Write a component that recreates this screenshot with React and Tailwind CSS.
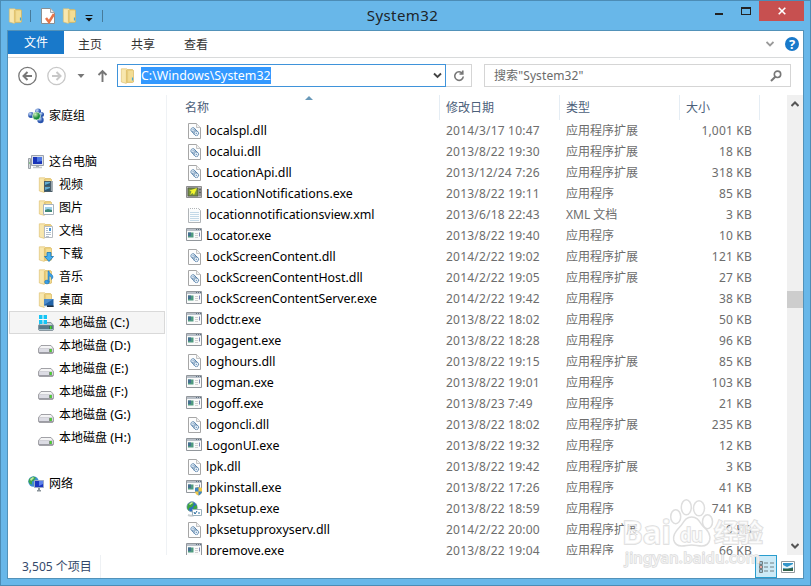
const folders = [
  { name: '视频', kind: 'video' },
  { name: '图片', kind: 'picture' },
  { name: '文档', kind: 'document' },
  { name: '下载', kind: 'download' },
  { name: '音乐', kind: 'music' },
  { name: '桌面', kind: 'desktop' },
];

const drives = ['C', 'D', 'E', 'F', 'G', 'H'];

const files = [
  { name: 'localspl.dll', date: '2014/3/17 10:47', size: '1,001 KB', icon: 'dll' },
  { name: 'localui.dll', date: '2013/8/22 19:30', size: '18 KB', icon: 'dll' },
  { name: 'LocationApi.dll', date: '2013/12/24 7:26', size: '318 KB', icon: 'dll' },
  { name: 'LocationNotifications.exe', date: '2013/8/22 19:11', size: '85 KB', icon: 'location' },
  { name: 'locationnotificationsview.xml', date: '2013/6/18 22:43', size: '3 KB', icon: 'xml' },
  { name: 'Locator.exe', date: '2013/8/22 19:40', size: '10 KB', icon: 'exe' },
  { name: 'LockScreenContent.dll', date: '2014/2/22 19:02', size: '121 KB', icon: 'dll' },
  { name: 'LockScreenContentHost.dll', date: '2014/2/22 19:05', size: '27 KB', icon: 'dll' },
  { name: 'LockScreenContentServer.exe', date: '2014/2/22 19:42', size: '38 KB', icon: 'exe' },
  { name: 'lodctr.exe', date: '2013/8/22 18:02', size: '50 KB', icon: 'exe' },
  { name: 'logagent.exe', date: '2013/8/22 18:28', size: '96 KB', icon: 'exe' },
  { name: 'loghours.dll', date: '2013/8/22 19:15', size: '85 KB', icon: 'dll' },
  { name: 'logman.exe', date: '2013/8/22 19:01', size: '103 KB', icon: 'exe' },
  { name: 'logoff.exe', date: '2013/8/23 7:49', size: '21 KB', icon: 'exe' },
  { name: 'logoncli.dll', date: '2013/8/22 18:02', size: '235 KB', icon: 'dll' },
  { name: 'LogonUI.exe', date: '2013/8/22 19:32', size: '12 KB', icon: 'exe' },
  { name: 'lpk.dll', date: '2013/8/22 19:42', size: '3 KB', icon: 'dll' },
  { name: 'lpkinstall.exe', date: '2013/8/22 17:26', size: '41 KB', icon: 'shield' },
  { name: 'lpksetup.exe', date: '2013/8/22 18:59', size: '741 KB', icon: 'globe' },
  { name: 'lpksetupproxyserv.dll', date: '2014/2/22 20:00', size: '9 KB', icon: 'dll' },
  { name: 'lpremove.exe', date: '2013/8/22 19:04', size: '66 KB', icon: 'exe' },
];

function fileType(name) {
  if (name.endsWith('.dll')) return '应用程序扩展';
  if (name.endsWith('.xml')) return 'XML 文档';
  return '应用程序';
}

function FolderIcon({ className = '', kind }) {
  return (
    <svg className={`shrink-0 ${className}`} width="16" height="16" viewBox="0 0 16 16">
      <path d="M5 1.500h7.500l1 1V14l-1 .5H6z" fill="#ecd07c" stroke="#d5b158" strokeWidth=".6" />
      <path d="M8 3h5v10.500H8z" fill="#f3dd94" />
      <path d="M1.300.800h5.500l.8 1V13l-1.300 2.400-5-1.400z" fill="#f8e7ae" stroke="#dcbc68" strokeWidth=".6" />
      <path d="M6.500 2v12.500" stroke="#e2c470" strokeWidth="1.200" />
      {!kind && <path d="M12.500 9.500v3" stroke="#43a8dc" strokeWidth="1.200" />}
      {kind === 'video' && (
        <g>
          <path d="M6 4h8.500v11H6z" fill="#4c5e69" />
          <path d="M7 5h5v4H7zM7 10h5v4H7z" fill="#62abd0" />
          <path d="M7 8l5-2v3H7zM7 13l5-2v3H7z" fill="#2c5873" />
          <path d="M13.500 4.500v10" stroke="#e8eef2" strokeWidth="1" strokeDasharray="1 1" />
        </g>
      )}
      {kind === 'picture' && (
        <g>
          <path d="M5.500 4.500h10v10h-10z" fill="#fff" stroke="#a7b2bc" />
          <path d="M7 7h7v5H7z" fill="#9dd0ea" />
          <path d="M7 10l3-1 4 1v2H7z" fill="#3e8877" />
        </g>
      )}
      {kind === 'document' && (
        <g>
          <path d="M6.500 3.500h8v11h-8z" fill="#fff" stroke="#b5bac0" />
          <path d="M8 5.500h2M8 7.500h2M8 9.500h5M8 11.500h5M8 13.500h3" stroke="#a1b0bd" strokeWidth=".8" />
          <path d="M11 5h2v3h-2z" fill="#4799db" />
        </g>
      )}
      {kind === 'download' && (
        <path d="M9 6.500h4v4h2.500L11 15.500 6.500 10.500H9z" fill="#47b0ee" stroke="#1875b5" strokeWidth="0.800" />
      )}
      {kind === 'music' && (
        <g fill="#3b9fe6" stroke="#1971b3" strokeWidth="0.500">
          <ellipse cx="9" cy="13" rx="2.400" ry="1.900" />
          <path d="M10 2h1c0 3 4 3 4 6 0 1-1 2-1.500 2.500C14 8 12 7 11.200 7v6H10z" />
        </g>
      )}
      {kind === 'desktop' && (
        <g>
          <path d="M6 7h9.500v8H6z" fill="#2364a8" />
          <path d="M6 7h9.500L6 13z" fill="#4c8ccc" />
          <path d="M6 13.500h9.500V15H6z" fill="#23303e" />
          <path d="M6 13.500h3V15H6z" fill="#d5e9f3" />
        </g>
      )}
    </svg>
  );
}

function DriveIcon({ system }) {
  return (
    <svg className="shrink-0" width="16" height="16" viewBox="0 0 16 16">
      <path d="M3 7.500h10l2.500 3v4l-.8 1H1.300l-.8-1v-4z" fill={system ? '#7c8e98' : '#c5c5ca'} stroke={system ? '#7c8e98' : '#929297'} strokeWidth=".8" />
      <path d="M3.200 8h9.600l1.700 2h-13z" fill={system ? '#c6d0d5' : '#f4f4f5'} />
      <path d="M1.200 10.500h13.600v3.500H1.200z" fill={system ? '#587889' : '#dcdce4'} />
      <path d="M1 14.500h14" stroke={system ? '#a1c0ca' : '#9c9ca4'} />
      <path d="M11 11h3v3h-3z" fill={system ? '#336e55' : '#7f967c'} />
      <path d="M12 11h1.500v3H12z" fill="#49d52d" />
      {system && (
        <g>
          <path d="M1 0h8v9H1z" fill="#fff" opacity="0.700" />
          <path d="M1 0h3.500v4H1zM5.500 0H9v4H5.500zM1 5h3.500v4H1zM5.500 5H9v4H5.500z" fill="#16c5f5" />
        </g>
      )}
    </svg>
  );
}

function HomeGroupIcon() {
  return (
    <svg className="shrink-0" width="17" height="16" viewBox="0 0 17 16">
      <defs>
        <radialGradient id="blueBall" cx="0.350" cy="0.300">
          <stop offset="0" stopColor="#c7ddfa" />
          <stop offset="1" stopColor="#2853ad" />
        </radialGradient>
        <radialGradient id="greenBall" cx="0.350" cy="0.300">
          <stop offset="0" stopColor="#ceefb8" />
          <stop offset="1" stopColor="#168b39" />
        </radialGradient>
      </defs>
      <circle cx="10" cy="3.500" r="3" fill="url(#blueBall)" />
      <circle cx="13.500" cy="6.500" r="2.500" fill="url(#blueBall)" />
      <circle cx="3" cy="7" r="2.900" fill="url(#blueBall)" />
      <circle cx="12.500" cy="12" r="3.200" fill="url(#blueBall)" />
      <circle cx="8.500" cy="8" r="4" fill="url(#greenBall)" stroke="#e9f3ef" strokeWidth="0.700" />
    </svg>
  );
}

function ComputerIcon() {
  return (
    <svg className="shrink-0" width="16" height="16" viewBox="0 0 16 16">
      <path d="M.5 4.500h2v10h-2z" fill="#d3d8dc" stroke="#9aa1a6" />
      <path d="M1 9h1" stroke="#3eaa40" />
      <path d="M3.500 1.500h12v10h-12z" fill="#dde1e8" stroke="#9ba2ad" />
      <path d="M5 3h9v7H5z" fill="#1a34b8" />
      <path d="M9 3h5v4L9 8z" fill="#4e78e4" />
      <path d="M8 12h3v1H8z" fill="#a1a7aa" />
      <path d="M5 13.500h9" stroke="#c1c6c9" strokeWidth="1.500" />
    </svg>
  );
}

function NetworkIcon() {
  return (
    <svg className="shrink-0" width="16" height="16" viewBox="0 0 16 16">
      <circle cx="5.500" cy="5.500" r="5.200" fill="#3c8fd0" />
      <path d="M1 3l4-2.500 3 1-2 3-2 1v3L2 8 .5 6z" fill="#3ba64e" />
      <path d="M2 3l3-2 1 1-3 3z" fill="#c3e7a6" />
      <path d="M6.500 4.500h9v7h-9z" fill="#1b35bf" stroke="#9daac4" />
      <path d="M11 5h4v3l-4 2z" fill="#5c81ec" />
      <path d="M10 12h2v2h-2zM9 14h4v1.500H9z" fill="#8c959b" />
    </svg>
  );
}

function FileIcon({ type }) {
  if (type === 'dll') {
    return (
      <svg className="shrink-0" width="16" height="16" viewBox="0 0 16 16">
        <path d="M2.500.500h8l4 4v11h-12z" fill="#fdfdfd" stroke="#a6a6a6" />
        <path d="M10.500.5v4h4" fill="#f1f1f1" stroke="#b5b5b5" strokeWidth=".8" />
        <g fill="#e8f1f9" stroke="#41719f">
          <circle cx="7" cy="6.800" r="2.100" strokeDasharray="1.100 .4" />
          <circle cx="10.300" cy="10.300" r="2.300" strokeDasharray="1.200 .4" />
          <path d="M8.500 5.500l3 3M5.500 8.300l3 3" strokeWidth=".8" />
          <path d="M6.600 6.800h1M9.800 10.300h1" />
        </g>
      </svg>
    );
  }

  if (type === 'xml') {
    return (
      <svg className="shrink-0" width="16" height="16" viewBox="0 0 16 16">
        <path d="M2.500 1.500h10l2 2v12h-12z" fill="#fafcfd" stroke="#b0b4b7" />
        <path d="M3 1.500h9" stroke="#fff" strokeDasharray="1 1" strokeWidth="2" />
        <path d="M4 5.500h9M4 7.500h9M4 9.500h9M4 11.500h9M4 13.500h9" stroke="#c3d9e8" />
      </svg>
    );
  }

  if (type === 'location') {
    return (
      <svg className="shrink-0" width="16" height="16" viewBox="0 0 16 16">
        <path d="M.5.500h15v11H.500z" fill="#bcbcbc" stroke="#8c8c8c" />
        <path d="M2 2h10v8H2z" fill="#7b9440" stroke="#4b5446" strokeWidth=".8" />
        <path d="M3.500 4.500L11 2 8 9l-1.500-2L4 9l1.500-3.500z" fill="#f2f52e" />
        <path d="M14 2.500v7" stroke="#444" strokeWidth="1.500" strokeDasharray="2 1" />
      </svg>
    );
  }

  if (type === 'globe') {
    return (
      <svg className="shrink-0" width="16" height="16" viewBox="0 0 16 16">
        <path d="M2 14c5 2 10-1 9-8" fill="none" stroke="#c7cdd0" strokeWidth="2" />
        <circle cx="6" cy="5.800" r="5" fill="#2c6fc2" stroke="#7d9db5" />
        <path d="M2 3l4-2 2 2-2 3-3 1v3L1 7zM8 5l3-1v3l-2 3-2-2z" fill="#3da540" />
        <path d="M3 3l3-2 1 1-3 2z" fill="#d9ed9c" />
        <path d="M6.500 8.500h9v6h-9z" fill="#fff" stroke="#9ab0bc" />
        <path d="M8 11l1 2 2-3M12 12h2" fill="none" stroke="#276c9f" />
      </svg>
    );
  }

  return (
    <svg className="shrink-0" width="16" height="16" viewBox="0 0 16 16">
      <path d="M.5.500h15v12H.500z" fill="#fafafa" stroke="#92979c" />
      <path d="M1 1h14v2H1z" fill="#b9c0c8" />
      <path d="M10 1.500h5" stroke="#5e7084" strokeDasharray="1 1" />
      <path d="M2 4.500h5.500v5H2z" fill="#4f9a80" />
      <path d="M2 4.500h3v3.500H2z" fill="#456f91" />
      <path d="M9 5.500h3M9 7.500h3M9 9.500h3" stroke="#d0d0d0" />
      <path d="M13.500 4.500v4" stroke="#7a86b5" />
      {type === 'shield' && (
        <g>
          <path d="M9 8l3.500-1L16 8v3.500c0 2-2 3.500-3.500 4C11 15 9 14 9 11.500z" fill="#efc84a" />
          <path d="M9 8l3.500-1v4.500H9zM12.500 11.500H16c0 2-2 3.500-3.500 4z" fill="#3f86c6" />
        </g>
      )}
    </svg>
  );
}

function TitleBar() {
  return (
    <header className="flex h-[29px] shrink-0 pl-2 pr-[6px]">
      <div className="flex w-[230px] items-center">
        <FolderIcon className="-ml-px" />
        <span className="ml-[6px] h-3 w-px bg-[#477b9b]" />
        <svg className="ml-[9px]" width="16" height="16" viewBox="0 0 16 16">
          <path d="M1.500.500h9l4 4v11h-13z" fill="#fff" stroke="#8a8e91" />
          <path d="M10.500.5v4h4" fill="#e5e5e5" stroke="#a2a5a8" />
          <path d="M6 10l3 4 5-8" fill="none" stroke="#e57449" strokeWidth="2.500" />
        </svg>
        <FolderIcon className="ml-[6px]" />
        <svg className="ml-[7px] mt-1" width="8" height="8" viewBox="0 0 8 8">
          <path d="M.5 1h7v1h-7zM.5 4h7L4 7.500z" fill="#111" />
        </svg>
        <span className="ml-[9px] h-3 w-px bg-[#477b9b]" />
      </div>
      <h1 className="flex-1 pr-[140px] pt-[2px] text-center text-[15px] leading-6 tracking-[0.4px] text-[#1d2429]">System32</h1>
      <div className="flex h-5">
        <button className="flex w-[26px] justify-center pt-3" aria-label="最小化">
          <span className="h-[2px] w-2 bg-[#222]" />
        </button>
        <button className="flex w-[27px] justify-center pt-[6px]" aria-label="最大化">
          <span className="h-2 w-[10px] border border-t-2 border-[#222]" />
        </button>
        <button className="flex w-[45px] items-center justify-center bg-[#c75050]" aria-label="关闭">
          <svg width="8" height="8" viewBox="0 0 8 8">
            <path d="M.7.700l6.600 6.600M7.300.700L.7 7.300" stroke="#fff" strokeWidth="1.600" />
          </svg>
        </button>
      </div>
    </header>
  );
}

function Ribbon() {
  return (
    <nav className="flex h-[27px] shrink-0 border-b border-[#d8dadb] text-[#333]">
      <button className="h-[23px] w-14 bg-[#1979ca] text-white">文件</button>
      <button className="ml-[14px] w-6 pt-[2px]">主页</button>
      <button className="ml-[29px] w-6 pt-[2px]">共享</button>
      <button className="ml-[29px] w-6 pt-[2px]">查看</button>
      <div className="ml-auto flex items-center gap-[11px] pr-1">
        <svg width="8" height="6" viewBox="0 0 8 6">
          <path d="M.5 1L4 4.500 7.500 1" fill="none" stroke="#999" strokeWidth="1.800" />
        </svg>
        <span className="flex size-[14px] items-center justify-center rounded-full bg-[#1979ca] text-[13px] font-bold text-white">?</span>
      </div>
    </nav>
  );
}

function AddressBar() {
  return (
    <div className="flex h-[37px] shrink-0 items-start pl-[10px] pt-[6px]">
      <svg className="mt-[2px]" width="20" height="20" viewBox="0 0 20 20" fill="none" stroke="#777">
        <circle cx="9.500" cy="10" r="8.700" strokeWidth="1.300" />
        <path d="M14 10H6M9.500 6L5.500 10l4 4" strokeWidth="2" />
      </svg>
      <svg className="ml-[9px] mt-[2px]" width="20" height="20" viewBox="0 0 20 20" fill="none" stroke="#c8c8c8">
        <circle cx="9.500" cy="10" r="8.700" strokeWidth="1.300" />
        <path d="M5 10h8M9.500 6l4 4-4 4" strokeWidth="2" />
      </svg>
      <svg className="ml-[10px] mt-[10px]" width="8" height="5" viewBox="0 0 8 5">
        <path d="M.5 0h7L4 4z" fill="#777" />
      </svg>
      <svg className="ml-[12px] mt-[5px]" width="11" height="14" viewBox="0 0 11 14">
        <path d="M5.500 13V2M1.500 6l4-4 4 4" fill="none" stroke="#777" strokeWidth="1.900" />
      </svg>
      <div className="ml-[9px] flex h-[23px] w-[329px] items-center border border-[#3f93da] pl-1">
        <FolderIcon className="-ml-[2px]" />
        <span className="ml-[5px] h-[17px] bg-[#3399ff] text-[12.4px] leading-[17px] text-white">C:\Windows\System32</span>
        <svg className="ml-auto mr-[3px]" width="9" height="7" viewBox="0 0 9 7">
          <path d="M1 1.500l3.500 3.500L8 1.500" fill="none" stroke="#444" strokeWidth="1.900" />
        </svg>
      </div>
      <div className="flex h-[23px] w-[26px] items-center justify-center border border-l-0 border-[#d5d5d5]">
        <svg width="12" height="12" viewBox="0 0 12 12">
          <path d="M9.500 3.500A4.300 4.300 0 1 0 10.300 6.500M6.500 4h3.300V.5" fill="none" stroke="#777" strokeWidth="1.600" />
        </svg>
      </div>
      <div className="ml-3 flex h-[23px] w-[307px] items-center border border-[#d5d5d5] pl-[9px] pr-2 text-[#6b6b6b]">
        <span className="tracking-[0.1px]">搜索"System32"</span>
        <svg className="ml-auto" width="12" height="12" viewBox="0 0 12 12" fill="none" stroke="#777">
          <circle cx="7.500" cy="4.300" r="3.200" strokeWidth="1.600" />
          <path d="M5.300 6.700L1 11" strokeWidth="2" />
        </svg>
      </div>
    </div>
  );
}

function Sidebar() {
  return (
    <aside className="w-[159px] shrink-0 border-r border-[#eff2f5] pt-[9px] text-black">
      <div className="flex h-[23px] items-center pl-5">
        <HomeGroupIcon />
        <span className="ml-1">家庭组</span>
      </div>
      <div className="mt-[23px] flex h-[23px] items-center pl-5">
        <ComputerIcon />
        <span className="ml-[5px]">这台电脑</span>
      </div>
      {folders.map(folder => (
        <div key={folder.kind} className="flex h-[23px] items-center pl-[30px]">
          <FolderIcon kind={folder.kind} />
          <span className="ml-[5px]">{folder.name}</span>
        </div>
      ))}
      {drives.map(letter => (
        <div
          key={letter}
          className={`ml-px mr-[1px] flex h-[23px] items-center pl-7 ${letter === 'C' ? 'border border-[#d9d9d9] bg-[#f5f5f5]' : 'border-l border-transparent'}`}
        >
          <DriveIcon system={letter === 'C'} />
          <span className="ml-[5px]">本地磁盘 <span className="text-[12.8px]">({letter}:)</span></span>
        </div>
      ))}
      <div className="mt-[23px] flex h-[23px] items-center pl-5">
        <NetworkIcon />
        <span className="ml-[5px]">网络</span>
      </div>
    </aside>
  );
}

function FileList() {
  return (
    <main className="relative h-[460px] w-[620px] overflow-hidden">
      <svg className="absolute left-[138px] top-[1px]" width="8" height="4" viewBox="0 0 8 4">
        <path d="M4 0l4 4H0z" fill="#6999b9" />
      </svg>
      <div className="flex h-[25px] items-center pl-[18px] text-[#4c607a]">
        <span className="w-[254px]">名称</span>
        <span className="flex h-full w-[120px] items-center border-l border-[#e5edf4] pl-[6px]">修改日期</span>
        <span className="flex h-full w-[120px] items-center border-l border-[#e5edf4] pl-[6px]">类型</span>
        <span className="flex h-full w-[81px] items-center border-x border-[#e5edf4] pl-[6px]">大小</span>
      </div>
      {files.map(file => (
        <div key={file.name} className="flex h-[21px] items-center pl-[19px] text-[#6d6d6d]">
          <FileIcon type={file.icon} />
          <span className="ml-1 w-[240px] text-[12.4px] text-black">{file.name}</span>
          <span className="w-[120px] text-[12px] tracking-[0.2px]">{file.date}</span>
          <span className="w-[106px]">{fileType(file.name)}</span>
          <span className="w-20 text-right tracking-[0.2px]">{file.size}</span>
        </div>
      ))}
    </main>
  );
}

function Scrollbar() {
  return (
    <div className="flex h-[460px] w-4 flex-col items-center bg-[#f0f0f0] py-[6px]">
      <svg width="8" height="6" viewBox="0 0 8 6">
        <path d="M.5 5L4 1.500 7.500 5" fill="none" stroke="#555" strokeWidth="2" />
      </svg>
      <div className="mt-[184px] h-[17px] w-4 bg-[#cdcdcd]" />
      <svg className="mt-auto" width="8" height="6" viewBox="0 0 8 6">
        <path d="M.5 1L4 4.500 7.500 1" fill="none" stroke="#555" strokeWidth="2" />
      </svg>
    </div>
  );
}

function Watermark() {
  return (
    <svg className="pointer-events-none absolute left-[619px] top-[494px]" width="152" height="82" viewBox="0 0 152 82">
      <g fill="#fff" fillOpacity=".55" stroke="#dedede" strokeWidth="1.500">
        <ellipse cx="55.700" cy="21.700" rx="5" ry="7" />
        <ellipse cx="66.300" cy="12.300" rx="5" ry="7.500" />
        <ellipse cx="79" cy="13.300" rx="5.500" ry="7.500" />
        <ellipse cx="87.500" cy="26.700" rx="5" ry="7" />
        <path d="M71.700 22c7 0 8 6 12 10 5 4 7 8 6 13-1 4-4 6-8 6-4 0-6-1-10-1s-6 1-10 1c-4 0-7-2-8-6-1-5 2-9 6-13s5-10 12-10z" />
      </g>
      <g fill="#fff" fillOpacity=".65" stroke="#dcdcdc" strokeWidth="1.500" fontWeight="700" paintOrder="stroke">
        <text x="2" y="48.500" fontSize="32" textLength="49" lengthAdjust="spacingAndGlyphs">Bai</text>
        <text x="60" y="47" fontSize="20" textLength="23" lengthAdjust="spacingAndGlyphs">du</text>
        <text x="94" y="47" fontSize="25" textLength="49">经验</text>
        <text x="5" y="68" fontSize="15" fontWeight="400" textLength="135">jingyan.baidu.com</text>
      </g>
    </svg>
  );
}

function StatusBar() {
  return (
    <footer className="flex h-[23px] shrink-0 text-[#34486a]">
      <span className="w-[93px] border-r border-[#eef1f4] pl-[14px] leading-[23px]">3,505 个项目</span>
      <div className="ml-auto flex">
        <div className="flex h-[23px] w-[22px] items-center justify-center border border-[#299dce] bg-[#cceaf7]">
          <svg width="15" height="14" viewBox="0 0 15 14" fill="none" stroke="#718084">
            <path d="M.5 1.500h3v3h-3zM.5 5.500h3v3h-3zM.5 9.500h3v3h-3z" fill="#fff" />
            <path d="M2 2v2M2 10v2" stroke="#4185ab" />
            <path d="M2 6v2" stroke="#cf4f45" />
            <path d="M5 3h4M11 3h4M5 7h4M11 7h4M5 11h4M11 11h4" />
          </svg>
        </div>
        <div className="flex w-[26px] items-center pl-1">
          <svg width="14" height="12" viewBox="0 0 14 12">
            <path d="M.5.500h13v11H.500z" fill="#fff" stroke="#949b9e" />
            <path d="M2 2h10v8H2z" fill="#3295ca" />
            <path d="M2 4l4 2 6-3v3l-5 2-5-1z" fill="#e7f5fb" />
            <path d="M2 8l10-1v3H2z" fill="#32634a" />
          </svg>
        </div>
      </div>
    </footer>
  );
}

function App() {
  return (
    <div className="relative flex h-[586px] w-[811px] flex-col overflow-hidden border border-[#4c8cb5] bg-[#68b7e9] font-['Noto_Sans','Noto_Sans_CJK_SC',sans-serif] text-[12px] leading-[18px]">
      <TitleBar />
      <div className="ml-[6px] flex h-[549px] w-[797px] shrink-0 flex-col border border-[#5292b9] bg-white">
        <Ribbon />
        <AddressBar />
        <div className="flex h-[460px] shrink-0">
          <Sidebar />
          <FileList />
          <Scrollbar />
        </div>
        <StatusBar />
      </div>
      <Watermark />
    </div>
  );
}

export default App;
